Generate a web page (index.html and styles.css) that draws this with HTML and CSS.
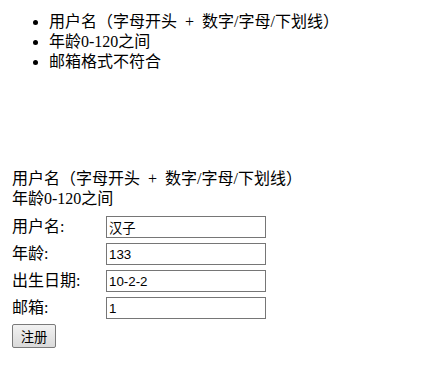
FILE: index.html
```html
<!DOCTYPE html>
<html lang="zh">
<head>
<meta charset="utf-8">
<title>注册</title>
<link rel="stylesheet" href="styles.css">
</head>
<body>
<ul class="errors">
  <li>用户名（字母开头 + 数字/字母/下划线）</li>
  <li>年龄0-120之间</li>
  <li>邮箱格式不符合</li>
</ul>
<div class="form-area">
  <div class="hint">用户名（字母开头 + 数字/字母/下划线）</div>
  <div class="hint">年龄0-120之间</div>
  <form class="reg-form">
    <div class="row"><label class="lbl">用户名:</label><input class="field" type="text" value="汉子"></div>
    <div class="row"><label class="lbl">年龄:</label><input class="field" type="text" value="133"></div>
    <div class="row"><label class="lbl">出生日期:</label><input class="field" type="text" value="10-2-2"></div>
    <div class="row"><label class="lbl">邮箱:</label><input class="field" type="text" value="1"></div>
    <div class="actions"><button class="btn" type="button">注册</button></div>
  </form>
</div>
</body>
</html>
```
FILE: styles.css
```css
html, body {
  margin: 0;
  padding: 0;
  background: #ffffff;
}
body {
  font-family: "Liberation Serif", "Noto Sans CJK SC", serif;
  font-size: 16px;
  line-height: 20px;
  color: #000000;
  text-spacing-trim: space-all;
}
.errors {
  margin: 0;
  padding: 12px 0 0 49px;
  list-style: disc;
  word-spacing: 4px;
}
.errors li {
  height: 20px;
}
.form-area {
  padding: 97px 0 0 12px;
  display: flex;
  flex-direction: column;
}
.hint {
  height: 20px;
  word-spacing: 4px;
}
.reg-form {
  margin: 7px 0 0 0;
  display: flex;
  flex-direction: column;
  gap: 5px;
}
.row {
  display: flex;
  align-items: center;
  height: 22px;
}
.lbl {
  width: 94px;
  flex: none;
}
.field {
  box-sizing: border-box;
  width: 160px;
  height: 22px;
  margin: 0;
  padding: 1px 2px;
  border: 1px solid #767676;
  font-family: "Liberation Sans", "Noto Sans CJK SC", sans-serif;
  font-size: 13.33px;
  color: #000000;
  background: #ffffff;
}
.actions {
  display: flex;
}
.btn {
  margin: 0;
  box-sizing: border-box;
  width: 44px;
  height: 24px;
  padding: 0 6px;
  border: 1px solid #7a7a7a;
  border-radius: 2px;
  background: linear-gradient(#f2f2f2, #dadada);
  font-family: "Liberation Sans", "Noto Sans CJK SC", sans-serif;
  font-size: 13.33px;
  color: #000000;
}
```
